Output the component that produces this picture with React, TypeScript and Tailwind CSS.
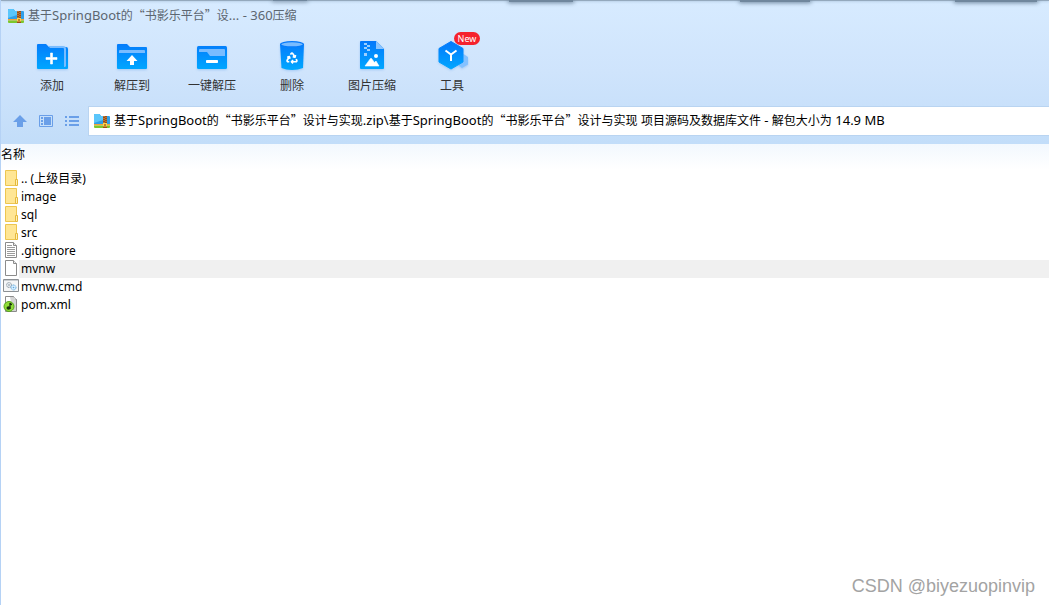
import { Fragment, type ReactNode } from "react";

/* Chinese quotation marks occupy a full em, so they are set in the CJK face;
   Latin runs can be given a class of their own. */
function Mixed({ text, latin }: { text: string; latin?: string }) {
  return (
    <>
      {text.split(/([“”]|[ -~]+)/).map((part, i) =>
        part === "“" || part === "”" ? (
          <span key={i} className="font-['Noto_Sans_CJK_SC',sans-serif]">{part}</span>
        ) : latin && /^[ -~]+$/.test(part) ? (
          <span key={i} className={latin}>{part}</span>
        ) : (
          <Fragment key={i}>{part}</Fragment>
        )
      )}
    </>
  );
}

function ArchiveIcon() {
  return (
    <svg width="16" height="14" viewBox="0 0 16 14" aria-hidden="true" className="shrink-0">
      <path d="M0 1Q0 0 1 0H5.500L7 2H15Q16 2 16 3V11H0z" fill="#2f9fe8" />
      <path d="M0 1Q0 0 1 0H5.500L7 2H9V6L0 9z" fill="#5ac6fb" />
      <path d="M0 10H16V11.500H0z" fill="#f2a33a" />
      <path d="M0 11.500H16V13Q16 14 15 14H1Q0 14 0 13z" fill="#7cc72c" />
      <path d="M9 2H13V14H9z" fill="#9a4d16" />
      <path d="M10 2V10M12 3V10" stroke="#d99a52" strokeWidth="1" strokeDasharray="1 1" />
      <path d="M9 9H13V12.500H9z" fill="#ffd24a" />
      <path d="M10.500 10H11.500V12H10.500z" fill="#7c3a0c" />
    </svg>
  );
}

function IconFrame({ children }: { children: ReactNode }) {
  return (
    <svg width="36" height="36" viewBox="0 0 36 36" aria-hidden="true" className="drop-shadow-[0_1px_1px_rgba(60,140,230,0.3)]">
      <defs>
        <linearGradient id="blue" x1="0" y1="4" x2="0" y2="32" gradientUnits="userSpaceOnUse">
          <stop offset="0" stopColor="#0579fb" />
          <stop offset="1" stopColor="#00a8ff" />
        </linearGradient>
      </defs>
      {children}
    </svg>
  );
}

const tools: { label: string; badge?: string; icon: ReactNode }[] = [
  {
    label: "添加",
    icon: (
      <>
        <path d="M3 7Q3 6 4 6H12L15 9H32Q34 9 34 11V30Q34 31 33 31H4Q3 31 3 30z" fill="url(#blue)" />
        <path d="M14 8H29Q32 8 32 11V28Q32 29 30 29V11Q30 10 29 10H16z" fill="#79bcff" />
        <path d="M16.500 15H18.500V19.500H23V21.500H18.500V26H16.500V21.500H12V19.500H16.500z" fill="#fff" stroke="#fff" strokeWidth=".6" />
      </>
    ),
  },
  {
    label: "解压到",
    icon: (
      <>
        <path d="M3 7Q3 6 4 6H13L16 9H32Q33 9 33 10V30Q33 31 32 31H4Q3 31 3 30z" fill="url(#blue)" />
        <path d="M5 15V13Q5 12 6 12H30Q31 12 31 13V15z" fill="#79bcff" />
        <path d="M18 17L23.500 23H20V27H16V23H12.500z" fill="#fff" />
      </>
    ),
  },
  {
    label: "一键解压",
    icon: (
      <>
        <rect x="3" y="8" width="30" height="23" rx="1.500" fill="url(#blue)" />
        <path d="M5 14V12Q5 11 6 11H30Q31 11 31 12V18H16L13 14z" fill="#79bcff" />
        <rect x="12" y="22" width="12" height="3" rx=".8" fill="#fff" />
      </>
    ),
  },
  {
    label: "删除",
    icon: (
      <>
        <path d="M6 6H30L29 30Q24 32 18 32T7.500 30z" fill="url(#blue)" />
        <ellipse cx="18" cy="6" rx="12" ry="3" fill="#0579fb" />
        <ellipse cx="18" cy="6.300" rx="10.800" ry="2" fill="#79bcff" />
        <g transform="translate(11.500 13.500) scale(.54)" fill="none" stroke="#fff" strokeWidth="3.200" strokeLinejoin="round">
          <path d="M7 19H4.800a1.800 1.800 0 0 1-1.600-2.700L7.200 9.500" />
          <path d="M11 19h8.200a1.800 1.800 0 0 0 1.600-2.700l-1.200-2.100" />
          <path d="m14 16-3 3 3 3" />
          <path d="M8.300 13.600 7.200 9.500 3.100 10.600" />
          <path d="m9.300 5.800 1.100-1.900a1.800 1.800 0 0 1 3.100 0l4 6.800" />
          <path d="m13.400 9.600 4.100 1.100 1.100-4.100" />
        </g>
      </>
    ),
  },
  {
    label: "图片压缩",
    icon: (
      <>
        <path d="M6 4Q6 3 7 3H22L30 11V30Q30 31 29 31H7Q6 31 6 30z" fill="url(#blue)" />
        <path d="M22 3L30 11H22z" fill="#8cc5ff" />
        <path d="M10 5H13V7H10zM13 7H16V9H13zM10 9H13V11H10zM13 11H16V13H13zM10 15H13V18H10z" fill="#9dcfff" />
        <circle cx="22" cy="18" r="2" fill="#fff" />
        <path d="M11 28L16.500 20.500Q17 20 17.500 20.500L20.500 24.500L22 23L25 28z" fill="#fff" stroke="#fff" strokeWidth=".6" strokeLinejoin="round" />
      </>
    ),
  },
  {
    label: "工具",
    badge: "New",
    icon: (
      <>
        <path d="M29.500 16L34 19V26.500L28 30L24 27V19z" fill="#84c1ff" />
        <path d="M17 3.500L29 10.500V24L17 31L5 24V10.500z" fill="url(#blue)" stroke="url(#blue)" strokeLinejoin="round" />
        <path d="M11.500 12.500L17 16.500L22.500 12.500M17 16.500V23" fill="none" stroke="#fff" strokeWidth="2" />
      </>
    ),
  },
];

type Kind = "folder" | "text" | "blank" | "cmd" | "xml";

function FileIcon({ kind }: { kind: Kind }) {
  if (kind === "folder")
    return (
      <svg width="16" height="18" viewBox="0 0 16 18" aria-hidden="true">
        <path d="M2.500 .5H13.500V15.500H2.500z" fill="#ffe694" stroke="#edc650" />
        <path d="M12.500 9.500H14.500V15.500H12.500z" fill="#fff0b5" stroke="#e5b93c" />
      </svg>
    );
  if (kind === "cmd")
    return (
      <svg width="16" height="18" viewBox="0 0 16 18" aria-hidden="true">
        <path d="M.5 1.500H15.500V13.500H.5z" fill="#f5f6f7" stroke="#8c9094" />
        <path d="M1 2.500H15" stroke="#c9cdd1" />
        <circle cx="6" cy="7" r="2.500" fill="#e2e8ee" stroke="#85919c" strokeDasharray="1.200 .6" />
        <circle cx="6" cy="7" r=".8" fill="#85919c" />
        <circle cx="10.500" cy="9.500" r="2.500" fill="#d9efff" stroke="#5ca8de" strokeDasharray="1.200 .6" />
        <circle cx="10.500" cy="9.500" r=".8" fill="#5ca8de" />
      </svg>
    );
  return (
    <svg width="16" height="18" viewBox="0 0 16 18" aria-hidden="true">
      <path d="M2.500 .5H10.500L13.500 3.500V15.500H2.500z" fill="#fff" stroke="#8b8b8b" />
      <path d="M10.500 .5V3.500H13.500" fill="#e9e9e9" stroke="#8b8b8b" />
      {kind === "text" && <path d="M4 3.500H9M4 5.500H12M4 7.500H12M4 9.500H12M4 11.500H12M4 13.500H12" stroke="#9b9b9b" />}
      {kind === "xml" && (
        <>
          <path d="M7 1H10.500L13 4V15H10z" fill="#d4d4d4" />
          <circle cx="6" cy="10.500" r="5" fill="#8fdc38" stroke="#57a51c" />
          <path d="M7 13V7Q7.500 8.500 9 8.500" fill="none" stroke="#17320a" strokeWidth="1.300" />
          <ellipse cx="5.500" cy="12" rx="2" ry="1.700" fill="#17320a" />
        </>
      )}
    </svg>
  );
}

const files: { name: string; kind: Kind; selected?: boolean }[] = [
  { name: ".. (上级目录)", kind: "folder" },
  { name: "image", kind: "folder" },
  { name: "sql", kind: "folder" },
  { name: "src", kind: "folder" },
  { name: ".gitignore", kind: "text" },
  { name: "mvnw", kind: "blank", selected: true },
  { name: "mvnw.cmd", kind: "cmd" },
  { name: "pom.xml", kind: "xml" },
];

export default function App() {
  return (
    <div className="relative flex min-h-screen flex-col overflow-hidden border-l border-[#b5d2f5] bg-white font-['Noto_Sans','Noto_Sans_CJK_SC',sans-serif] text-xs text-black">
      <div aria-hidden="true" className="absolute inset-x-0 top-0 h-px bg-[#94a9bd] shadow-[0_0_3px_#7f9bb5]">
        <div className="absolute left-[26%] h-px w-[34px] bg-[#70879d] shadow-[0_0_4px_1px_#7c92a8]" />
        <div className="absolute left-[48.5%] h-0.5 w-[64px] bg-[#70879d] shadow-[0_0_4px_1px_#71879d]" />
        <div className="absolute left-[70.5%] h-0.5 w-[70px] bg-[#70879d] shadow-[0_0_4px_1px_#71879d]" />
        <div className="absolute left-[91%] h-0.5 w-[82px] bg-[#70879d] shadow-[0_0_4px_1px_#71879d]" />
      </div>

      <header className="bg-linear-to-b from-[#d7ebff] via-[#cfe4fc] to-[#c2ddf9]">
        <h1 className="flex h-8 items-center gap-1 pl-[7px] text-[#5c6670]">
          <ArchiveIcon />
          <span><Mixed text="基于SpringBoot的“书影乐平台”设... - 360压缩" latin="text-[13px]" /></span>
        </h1>

        <div role="toolbar" aria-label="工具栏" className="flex h-[75px] items-start pt-1.5 pl-[11px]">
          {tools.map((tool) => (
            <button key={tool.label} type="button" className="relative flex w-20 flex-col items-center gap-1 text-[#333]">
              <IconFrame>{tool.icon}</IconFrame>
              <span className="leading-4">{tool.label}</span>
              {tool.badge && (
                <span className="absolute -top-1.5 left-[42px] flex h-[13px] w-[26px] items-center justify-center rounded-full bg-[#f5222d] text-[9px] text-white">
                  {tool.badge}
                </span>
              )}
            </button>
          ))}
        </div>

        <div className="flex items-center pb-[9px]">
          <nav aria-label="导航" className="flex w-[88px] shrink-0 items-center gap-2.5 pl-[11px]">
            <button type="button" aria-label="上级目录">
              <svg width="16" height="16" viewBox="0 0 16 16" aria-hidden="true">
                <path d="M8 2L15 9H11V14H5V9H1z" fill="#6a9fe8" />
              </svg>
            </button>
            <button type="button" aria-label="预览">
              <svg width="16" height="16" viewBox="0 0 16 16" aria-hidden="true">
                <path d="M1.500 2.500H14.500V13.500H1.500z" fill="none" stroke="#6a9fe8" />
                <path d="M6 4H13V12H6zM3 4H5V6H3zM3 7H5V9H3zM3 10H5V12H3z" fill="#6a9fe8" />
              </svg>
            </button>
            <button type="button" aria-label="列表">
              <svg width="16" height="16" viewBox="0 0 16 16" aria-hidden="true">
                <path d="M1 3H3V5H1zM5 3H15V5H5zM1 7H3V9H1zM5 7H15V9H5zM1 11H3V13H1zM5 11H15V13H5z" fill="#6a9fe8" />
              </svg>
            </button>
          </nav>
          <div className="flex h-7 min-w-0 flex-1 items-center gap-1 bg-white pl-[5px] outline outline-[#b9d4f1]">
            <ArchiveIcon />
            <p className="truncate">
              <Mixed
                text="基于SpringBoot的“书影乐平台”设计与实现.zip\基于SpringBoot的“书影乐平台”设计与实现 项目源码及数据库文件 - 解包大小为 14.9 MB"
                latin="text-[13px]"
              />
            </p>
          </div>
        </div>
      </header>

      <main className="flex-1">
        <table className="w-full border-collapse text-left">
          <thead>
            <tr className="h-[26px] bg-linear-to-b from-[#f2f8fe] to-white">
              <th colSpan={2} scope="col" className="p-0 pb-1 font-normal">名称</th>
            </tr>
          </thead>
          <tbody>
            {files.map((file) => (
              <tr key={file.name} className="h-[18px]">
                <td className="w-[18px] p-0 pl-0.5">
                  <span className="flex h-[18px] items-center"><FileIcon kind={file.kind} /></span>
                </td>
                <td className={file.selected ? "bg-[#f0f0f0] p-0 pl-0.5 leading-[18px]" : "p-0 pl-0.5 leading-[18px]"}>
                  {file.name}
                </td>
              </tr>
            ))}
          </tbody>
        </table>
      </main>

      <footer className="flex justify-end pr-3.5 pb-[7px] font-['Liberation_Sans',sans-serif] text-lg leading-6 text-[#a3a3a3]">
        CSDN @biyezuopinvip
      </footer>
    </div>
  );
}
